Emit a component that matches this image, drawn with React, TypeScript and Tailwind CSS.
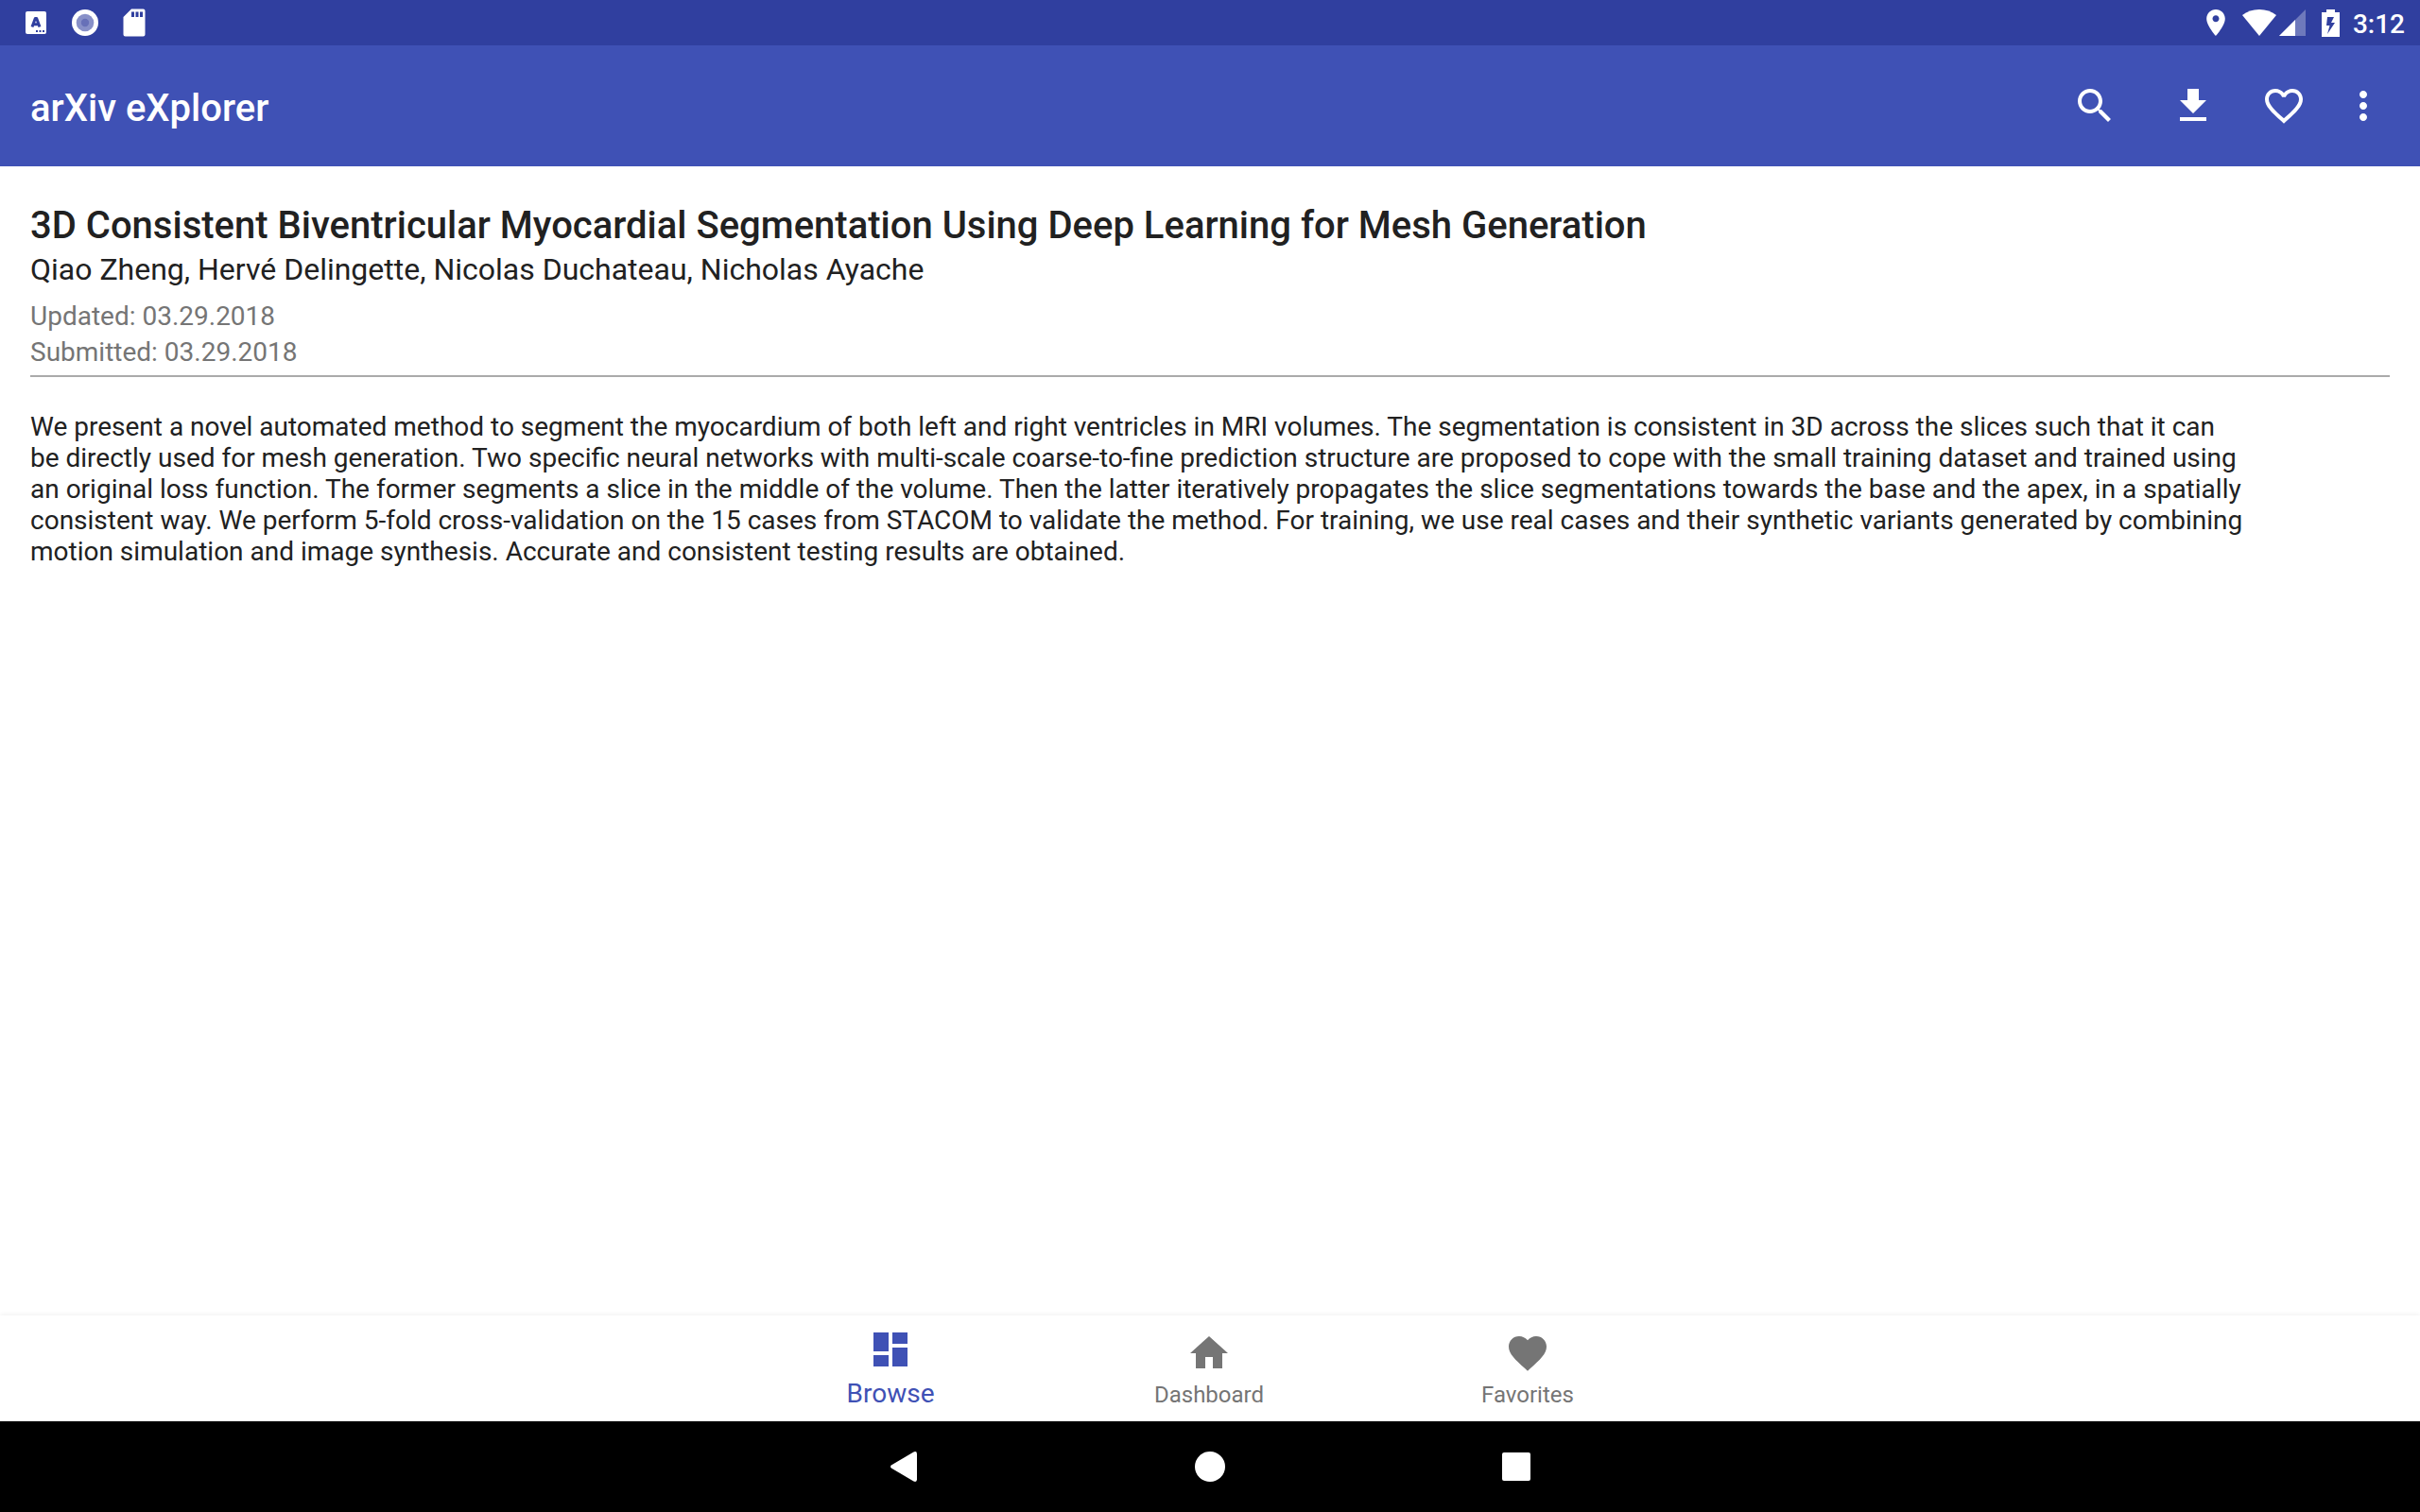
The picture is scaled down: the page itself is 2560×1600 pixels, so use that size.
import type { ReactNode } from "react";

function MaterialIcon({ d, className = "size-12" }: { d: string; className?: string }) {
  return (
    <svg viewBox="0 0 24 24" fill="currentColor" aria-hidden="true" className={className}>
      <path d={d} />
    </svg>
  );
}

const SEARCH =
  "M15.5 14h-.79l-.28-.27C15.41 12.59 16 11.11 16 9.5 16 5.91 13.09 3 9.5 3S3 5.91 3 9.5 5.91 16 9.5 16c1.61 0 3.09-.59 4.23-1.57l.27.28v.79l5 4.99L20.49 19l-4.99-5zm-6 0C7.01 14 5 11.99 5 9.5S7.01 5 9.5 5 14 7.01 14 9.5 11.99 14 9.5 14z";
const DOWNLOAD = "M19 9h-4V3H9v6H5l7 7 7-7zM5 18v2h14v-2H5z";
const HEART_OUTLINE =
  "M16.5 3c-1.74 0-3.41.81-4.5 2.09C10.91 3.81 9.24 3 7.5 3 4.42 3 2 5.42 2 8.5c0 3.78 3.4 6.86 8.55 11.54L12 21.35l1.45-1.32C18.6 15.36 22 12.28 22 8.5 22 5.42 19.58 3 16.5 3zm-4.4 15.55l-.1.1-.1-.1C7.14 14.24 4 11.39 4 8.5 4 6.5 5.5 5 7.5 5c1.54 0 3.04.99 3.57 2.36h1.87C13.46 5.99 14.96 5 16.5 5c2 0 3.5 1.5 3.5 3.5 0 2.89-3.14 5.74-7.9 10.05z";
const MORE =
  "M12 8c1.1 0 2-.9 2-2s-.9-2-2-2-2 .9-2 2 .9 2 2 2zm0 2c-1.1 0-2 .9-2 2s.9 2 2 2 2-.9 2-2-.9-2-2-2zm0 6c-1.1 0-2 .9-2 2s.9 2 2 2 2-.9 2-2-.9-2-2-2z";
const BROWSE = "M3 13h8V3H3v10zm0 8h8v-6H3v6zm10 0h8V11h-8v10zm0-18v6h8V3h-8z";
const HOME = "M10 20v-6h4v6h5v-8h3L12 3 2 12h3v8z";
const HEART =
  "M12 21.35l-1.45-1.32C5.4 15.36 2 12.28 2 8.5 2 5.42 4.42 3 7.5 3c1.74 0 3.41.81 4.5 2.09C13.09 3.81 14.76 3 16.5 3 19.58 3 22 5.42 22 8.5c0 3.78-3.4 6.86-8.55 11.54L12 21.35z";

function StatusBar() {
  return (
    <div className="flex h-12 items-center justify-between bg-[#303f9f] pr-4 pl-[27px] text-white">
      <div className="flex items-center">
        <svg viewBox="0 0 22 24" className="mr-[27px] h-6 w-[22px]" aria-hidden="true">
          <rect width="22" height="24" rx="2" fill="#fff" />
          <path
            d="M7 16.5 L10.300 7.500 H11.700 L15 16.500 M8.500 13.800 H13.500"
            fill="none"
            stroke="#303f9f"
            strokeWidth="3"
            strokeLinejoin="round"
          />
          <path d="M11 20h2v2h-2zM14.5 20h2v2h-2zM18 20h2v2h-2z" fill="#303f9f" />
        </svg>
        <svg viewBox="0 0 28 28" className="mr-[26px] size-7" aria-hidden="true">
          <circle cx="14" cy="14" r="14" fill="#fff" />
          <circle cx="14" cy="14" r="9.3" fill="#8890c8" />
          <circle cx="14" cy="14" r="4.2" fill="#6770b8" />
        </svg>
        <svg viewBox="0 0 24 30" className="h-[30px] w-6" aria-hidden="true">
          <path
            fill="#fff"
            fillRule="evenodd"
            d="M9 .5H21.500a2 2 0 0 1 2 2V27.500a2 2 0 0 1-2 2H2.500a2 2 0 0 1-2-2V9zM9 3.500V9h3V3.500zM13.500 3.500V9h3V3.500zM18 3.500V9h3V3.500z"
          />
        </svg>
      </div>
      <div className="flex items-center">
        <svg viewBox="5 2 14 20" className="mr-[18px] h-7 w-5" aria-hidden="true">
          <path
            fill="#fff"
            d="M12 2C8.13 2 5 5.130 5 9c0 5.250 7 13 7 13s7-7.750 7-13c0-3.870-3.130-7-7-7zm0 9.500c-1.380 0-2.500-1.120-2.500-2.500s1.120-2.500 2.500-2.500 2.500 1.120 2.500 2.500-1.120 2.500-2.500 2.500z"
          />
        </svg>
        <svg viewBox="0 0 36 28" className="mr-[3px] h-7 w-9" aria-hidden="true">
          <path fill="#fff" d="M18 28 L0 6 C5 2 11 0 18 0 S31 2 36 6z" />
        </svg>
        <svg viewBox="0 0 28 28" className="mr-[17px] size-7" aria-hidden="true">
          <path fill="#fff" fillOpacity=".3" d="M0 28 L28 0V28z" />
          <path fill="#fff" d="M0 28 L17 11V28z" />
        </svg>
        <svg viewBox="0 0 19 29" className="mr-[14px] h-[29px] w-[19px]" aria-hidden="true">
          <path
            fill="#fff"
            fillRule="evenodd"
            d="M5 0H14V3H19V29H0V3H5zM6 8L5 17H8.500L6 26L14 14H10L13 8z"
          />
        </svg>
        <span className="pt-1 text-[28px] leading-8 font-medium">3:12</span>
      </div>
    </div>
  );
}

function ActionButton({ label, className, children }: { label: string; className: string; children: ReactNode }) {
  return (
    <button type="button" aria-label={label} className={`flex h-full items-center justify-center ${className}`}>
      {children}
    </button>
  );
}

function AppBar() {
  return (
    <header className="flex h-32 items-center justify-between bg-[#3f51b5] pr-6 pl-8 text-white">
      <h1 className="pt-1.5 text-[40px] leading-12 font-medium">arXiv eXplorer</h1>
      <div className="flex h-full items-center">
        <ActionButton label="Search" className="w-28">
          <MaterialIcon d={SEARCH} />
        </ActionButton>
        <ActionButton label="Download" className="w-24">
          <MaterialIcon d={DOWNLOAD} />
        </ActionButton>
        <ActionButton label="Add to favorites" className="w-24">
          <MaterialIcon d={HEART_OUTLINE} />
        </ActionButton>
        <ActionButton label="More options" className="w-[72px]">
          <MaterialIcon d={MORE} />
        </ActionButton>
      </div>
    </header>
  );
}

function Article() {
  return (
    <main className="flex-1 px-8 pt-10 text-[#212121]">
      <h2 className="text-[40px] leading-[46px] font-medium">
        3D Consistent Biventricular Myocardial Segmentation Using Deep Learning for Mesh Generation
      </h2>
      <p className="text-[32px] leading-[46px]">
        Qiao Zheng, Hervé Delingette, Nicolas Duchateau, Nicholas Ayache
      </p>
      <div className="border-b-2 border-[#aaaaaa] pt-2 pb-[5px] text-[28px] leading-[38px] text-[#757575]">
        <p>Updated: 03.29.2018</p>
        <p>Submitted: 03.29.2018</p>
      </div>
      <p className="pt-9 text-[28px] leading-[33px]">
        We present a novel automated method to segment the myocardium of both left and right ventricles in MRI
        volumes. The segmentation is consistent in 3D across the slices such that it can
        <br />
        be directly used for mesh generation. Two specific neural networks with multi-scale coarse-to-fine prediction
        structure are proposed to cope with the small training dataset and trained using
        <br />
        an original loss function. The former segments a slice in the middle of the volume. Then the latter
        iteratively propagates the slice segmentations towards the base and the apex, in a spatially
        <br />
        consistent way. We perform 5-fold cross-validation on the 15 cases from STACOM to validate the method. For
        training, we use real cases and their synthetic variants generated by combining
        <br />
        motion simulation and image synthesis. Accurate and consistent testing results are obtained.
      </p>
    </main>
  );
}

function TabBar() {
  return (
    <nav className="flex h-28 justify-center bg-white pr-0.5 shadow-[0_-1px_5px_rgba(0,0,0,0.06)]">
      <button type="button" aria-current="page" className="flex w-[337px] flex-col items-center pt-3 text-[#3f51b5]">
        <MaterialIcon d={BROWSE} />
        <span className="pt-[7px] text-[28px] leading-8">Browse</span>
      </button>
      <button type="button" className="flex w-[337px] flex-col items-center pt-4 text-[#757575]">
        <MaterialIcon d={HOME} />
        <span className="pt-1 text-[24px] leading-8">Dashboard</span>
      </button>
      <button type="button" className="flex w-[337px] flex-col items-center pt-4 text-[#757575]">
        <MaterialIcon d={HEART} />
        <span className="pt-1 text-[24px] leading-8">Favorites</span>
      </button>
    </nav>
  );
}

function SystemNav() {
  return (
    <div className="flex h-24 items-center justify-center bg-black text-white">
      <button type="button" aria-label="Back" className="flex h-full w-[324px] items-center justify-center">
        <svg viewBox="0 0 28 32" className="h-8 w-7" aria-hidden="true">
          <path
            fill="#fff"
            d="M1.200 14.200 L24.500 .4 Q28 -.8 28 2.500V29.500Q28 32.800 24.500 31.600L1.200 17.800Q-1.200 16 1.200 14.200z"
          />
        </svg>
      </button>
      <button type="button" aria-label="Home" className="flex h-full w-[324px] items-center justify-center">
        <span className="size-8 rounded-full bg-white" />
      </button>
      <button type="button" aria-label="Recent apps" className="flex h-full w-[324px] items-center justify-center">
        <span className="size-[30px] rounded-[2px] bg-white" />
      </button>
    </div>
  );
}

export default function App() {
  return (
    <div className="flex min-h-screen flex-col bg-white font-[Roboto,sans-serif]">
      <StatusBar />
      <AppBar />
      <Article />
      <TabBar />
      <SystemNav />
    </div>
  );
}
